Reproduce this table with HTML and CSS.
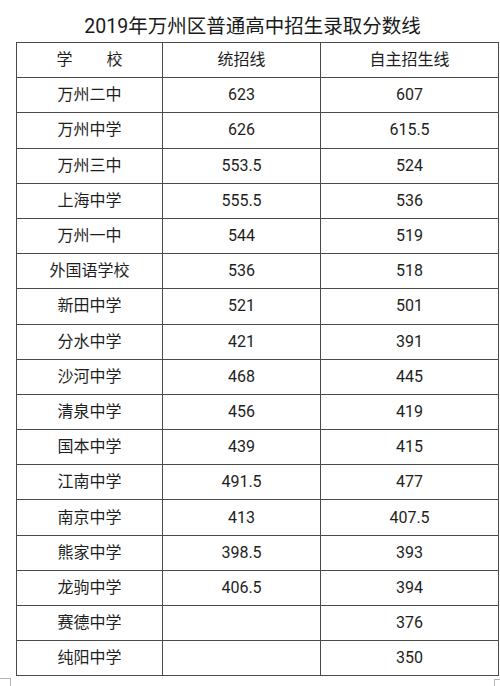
FILE: index.html
```html
<!DOCTYPE html>
<html lang="zh-CN">
<head>
<meta charset="utf-8">
<title>2019年万州区普通高中招生录取分数线</title>
<link rel="stylesheet" href="styles.css">
</head>
<body>
<div class="page">
  <h1 class="title">2019年万州区普通高中招生录取分数线</h1>
  <table class="scores">
    <colgroup>
      <col class="c1"><col class="c2"><col class="c3">
    </colgroup>
    <tr><td>学<span class="gap"></span>校</td><td>统招线</td><td>自主招生线</td></tr>
    <tr><td>万州二中</td><td>623</td><td>607</td></tr>
    <tr><td>万州中学</td><td>626</td><td>615.5</td></tr>
    <tr><td>万州三中</td><td>553.5</td><td>524</td></tr>
    <tr><td>上海中学</td><td>555.5</td><td>536</td></tr>
    <tr><td>万州一中</td><td>544</td><td>519</td></tr>
    <tr><td>外国语学校</td><td>536</td><td>518</td></tr>
    <tr><td>新田中学</td><td>521</td><td>501</td></tr>
    <tr><td>分水中学</td><td>421</td><td>391</td></tr>
    <tr><td>沙河中学</td><td>468</td><td>445</td></tr>
    <tr><td>清泉中学</td><td>456</td><td>419</td></tr>
    <tr><td>国本中学</td><td>439</td><td>415</td></tr>
    <tr><td>江南中学</td><td>491.5</td><td>477</td></tr>
    <tr><td>南京中学</td><td>413</td><td>407.5</td></tr>
    <tr><td>熊家中学</td><td>398.5</td><td>393</td></tr>
    <tr><td>龙驹中学</td><td>406.5</td><td>394</td></tr>
    <tr><td>赛德中学</td><td></td><td>376</td></tr>
    <tr><td>纯阳中学</td><td></td><td>350</td></tr>
  </table>
  <div class="foot">
    <span class="mark-left"></span>
    <span class="mark-right"></span>
  </div>
</div>
</body>
</html>
```
FILE: styles.css
```css
html, body {
  margin: 0;
  padding: 0;
  background: #ffffff;
}
.page {
  width: 500px;
  height: 686px;
  overflow: hidden;
  font-family: Roboto, "Noto Sans CJK SC", sans-serif;
  color: #1e1e1e;
}
.title {
  margin: 0;
  height: 42px;
  padding-left: 5px;
  box-sizing: border-box;
  padding-top: 15px;
  font-size: 19.5px;
  font-weight: 400;
  line-height: 24px;
  text-align: center;
  color: #1a1a1a;
}
.scores {
  margin-left: 16px;
  width: 482px;
  border-collapse: collapse;
  table-layout: fixed;
  font-size: 16px;
}
.c1 { width: 146px; }
.c2 { width: 158px; }
.c3 { width: 178px; }
.scores td {
  border: 1.5px solid #4a4a4a;
  height: 35.2px;
  padding: 0;
  box-sizing: border-box;
  text-align: center;
  vertical-align: middle;
  line-height: 20px;
}
.gap {
  display: inline-block;
  width: 34px;
}
.foot {
  position: relative;
  height: 12px;
}
.mark-left {
  position: absolute;
  left: 0;
  top: 2px;
  width: 10px;
  height: 10px;
  border-top: 1px solid #b5b5b5;
  border-right: 1px solid #b5b5b5;
}
.mark-right {
  position: absolute;
  right: 0;
  top: 3px;
  width: 5px;
  height: 8px;
  border-top: 1px solid #b5b5b5;
  border-left: 1px solid #b5b5b5;
}
```
